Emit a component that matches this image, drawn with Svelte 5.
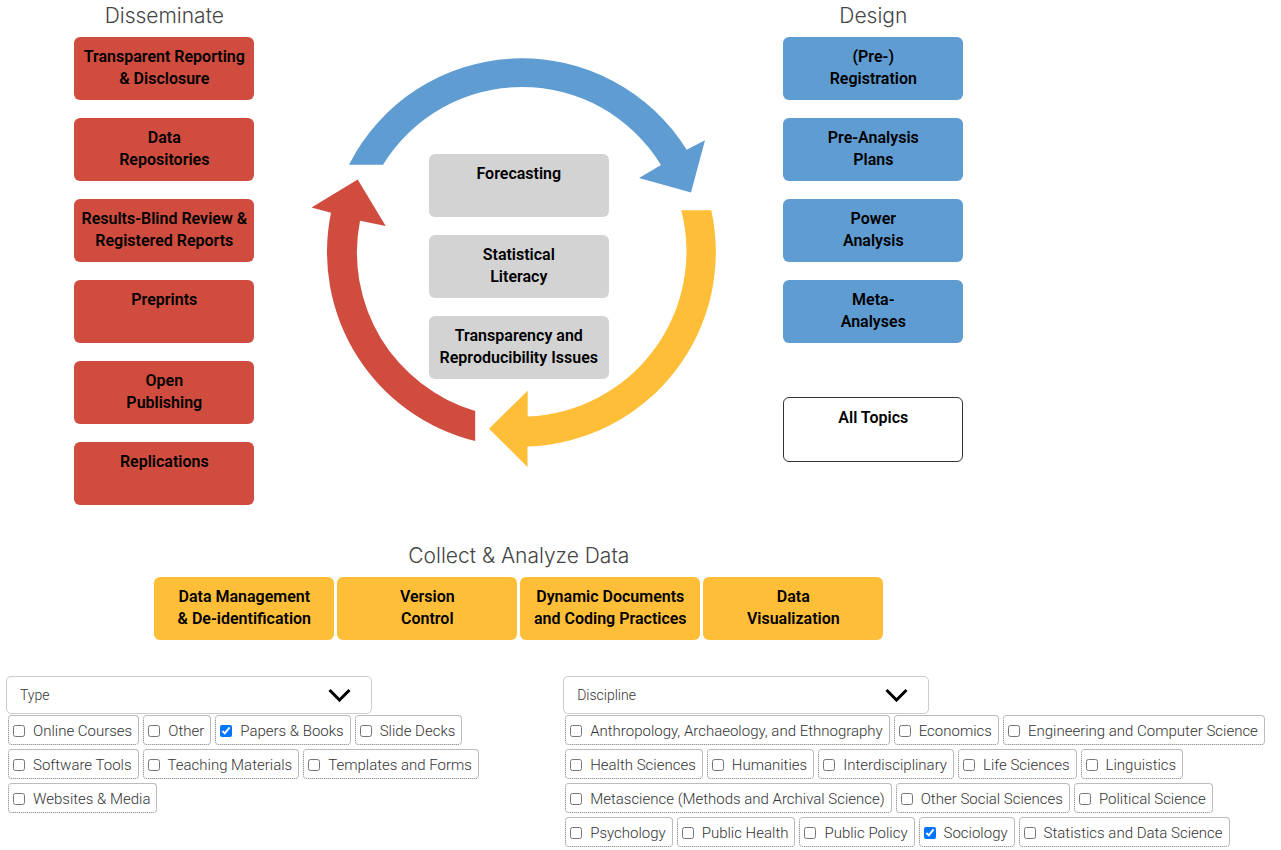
<script>
  const disseminate = [
    ['Transparent Reporting', '& Disclosure'],
    ['Data', 'Repositories'],
    ['Results-Blind Review &', 'Registered Reports'],
    ['Preprints'],
    ['Open', 'Publishing'],
    ['Replications'],
  ];
  const design = [
    ['(Pre-)', 'Registration'],
    ['Pre-Analysis', 'Plans'],
    ['Power', 'Analysis'],
    ['Meta-', 'Analyses'],
  ];
  const general = [
    ['Forecasting'],
    ['Statistical', 'Literacy'],
    ['Transparency and', 'Reproducibility Issues'],
  ];
  const analyze = [
    ['Data Management', '& De-identification'],
    ['Version', 'Control'],
    ['Dynamic Documents', 'and Coding Practices'],
    ['Data', 'Visualization'],
  ];

  let filters = $state([
    {
      name: 'Type',
      options: [
        'Online Courses', 'Other', 'Papers & Books', 'Slide Decks', 'Software Tools',
        'Teaching Materials', 'Templates and Forms', 'Websites & Media',
      ],
      selected: ['Papers & Books'],
    },
    {
      name: 'Discipline',
      options: [
        'Anthropology, Archaeology, and Ethnography', 'Economics',
        'Engineering and Computer Science', 'Health Sciences', 'Humanities',
        'Interdisciplinary', 'Life Sciences', 'Linguistics',
        'Metascience (Methods and Archival Science)', 'Other Social Sciences',
        'Political Science', 'Psychology', 'Public Health', 'Public Policy',
        'Sociology', 'Statistics and Data Science',
      ],
      selected: ['Sociology'],
    },
  ]);
</script>

{#snippet topic(lines, tone)}
  <button type="button" class="topic {tone}">
    {#each lines as line}<span>{line}</span>{/each}
  </button>
{/snippet}

<main>
  <div class="topics">
    <div class="wheel">
      <section class="stack">
        <h2>Disseminate</h2>
        {#each disseminate as lines}{@render topic(lines, 'red')}{/each}
      </section>

      <div class="cycle">
        <svg viewBox="310 56 417 412" width="417" height="412" aria-hidden="true">
          <path fill="#5f9cd2" d="M349 164.700A194 194 0 0 1 686.700 149.700L705 140.300L691 192.500L639 178L661 165A163 163 0 0 0 383 164.700Z" />
          <path fill="#ffbe38" d="M681.300 210.300H711.300A194.500 194.500 0 0 1 527.500 446.500V467L489 428.700L527.700 390.700V416.500A165.300 165.300 0 0 0 681.300 210.300Z" />
          <path fill="#d04c3f" d="M475.200 441A194.500 194.500 0 0 1 331 212.700L311.500 207.500L357.700 179.500L385.700 226L360 220.700A165.300 165.300 0 0 0 475.200 411Z" />
        </svg>
        <div class="stack">
          {#each general as lines}{@render topic(lines, 'gray')}{/each}
        </div>
      </div>

      <section class="stack">
        <h2>Design</h2>
        {#each design as lines}{@render topic(lines, 'blue')}{/each}
        <div class="all">{@render topic(['All Topics'], 'plain')}</div>
      </section>
    </div>

    <section class="analyze">
      <h2>Collect &amp; Analyze Data</h2>
      <div class="row">
        {#each analyze as lines}{@render topic(lines, 'yellow')}{/each}
      </div>
    </section>
  </div>

  <form class="filters">
    {#each filters as filter}
      <div class="filter">
        <div class="dropdown">
          <select aria-label={filter.name}>
            <option>{filter.name}</option>
          </select>
          <svg viewBox="0 0 24 14" width="24" height="14" aria-hidden="true">
            <path d="M1.500 2L11.500 12L21.500 2" fill="none" stroke="#000" stroke-width="3" />
          </svg>
        </div>
        <div class="chips">
          {#each filter.options as option}
            <label>
              <input type="checkbox" value={option} bind:group={filter.selected} />
              <span>{option}</span>
            </label>
          {/each}
        </div>
      </div>
    {/each}
  </form>
</main>

<style>
  :global(body) {
    margin: 0;
    background: #fff;
  }

  main {
    font-family: Roboto, sans-serif;
    color: #333;
  }

  .topics {
    width: 81%;
    min-width: 900px;
  }

  .wheel {
    display: grid;
    grid-template-columns: 180px 417px 180px;
    justify-content: center;
    gap: 56px;
  }

  .stack {
    display: flex;
    flex-direction: column;
    gap: 18px;
  }

  h2 {
    margin: 0;
    font: 300 21px/32px Inter, sans-serif;
    text-align: center;
    color: #444;
  }

  .stack h2 {
    margin-bottom: -13px;
  }

  .topic {
    display: flex;
    flex-direction: column;
    align-items: center;
    justify-content: flex-start;
    box-sizing: border-box;
    width: 180px;
    height: 63px;
    padding: 9px 0 0;
    border: 0;
    border-radius: 6px;
    font: 600 16px/22px Roboto, sans-serif;
    white-space: nowrap;
    color: #000;
    cursor: pointer;
  }

  .red { background: #d04c3f; }
  .blue { background: #5f9cd2; }
  .gray { background: #d3d3d3; }
  .yellow { background: #ffbe38; }

  .plain {
    height: 65px;
    border: 1px solid #333;
    background: #fff;
  }

  .all {
    margin-top: 36px;
  }

  .cycle {
    display: grid;
    justify-items: center;
    align-content: start;
    padding-top: 56px;
  }

  .cycle > * {
    grid-area: 1 / 1;
  }

  .cycle .stack {
    padding-top: 98px;
  }

  .analyze {
    margin-top: 35px;
  }

  .row {
    display: flex;
    justify-content: center;
    gap: 3px;
    margin-top: 5px;
  }

  .filters {
    display: grid;
    grid-template-columns: 43.7% 1fr;
    margin: 36px 0 0;
    padding-left: 6px;
  }

  .dropdown {
    display: grid;
    align-items: center;
    max-width: 366px;
  }

  .dropdown > * {
    grid-area: 1 / 1;
  }

  .dropdown svg {
    justify-self: end;
    margin-right: 20px;
    pointer-events: none;
  }

  select {
    appearance: none;
    width: 100%;
    height: 38px;
    padding: 0 13px;
    border: 1px solid #ccc;
    border-radius: 5px;
    background: #fff;
    font: 300 14px/20px Roboto, sans-serif;
    color: #333;
  }

  .chips {
    display: flex;
    flex-wrap: wrap;
    gap: 4px;
    padding: 1px 0 0 2px;
  }

  label {
    display: flex;
    align-items: center;
    box-sizing: border-box;
    height: 30px;
    padding: 1px 6px 0 4px;
    border: 1px dotted #777;
    border-top: 1px solid #bbb;
    border-right: 1px solid #bbb;
    border-radius: 4px;
    font-weight: 300;
    font-size: 15px;
    white-space: nowrap;
  }

  input {
    width: 12px;
    height: 12px;
    margin: 0 8px 0 0;
  }
</style>
